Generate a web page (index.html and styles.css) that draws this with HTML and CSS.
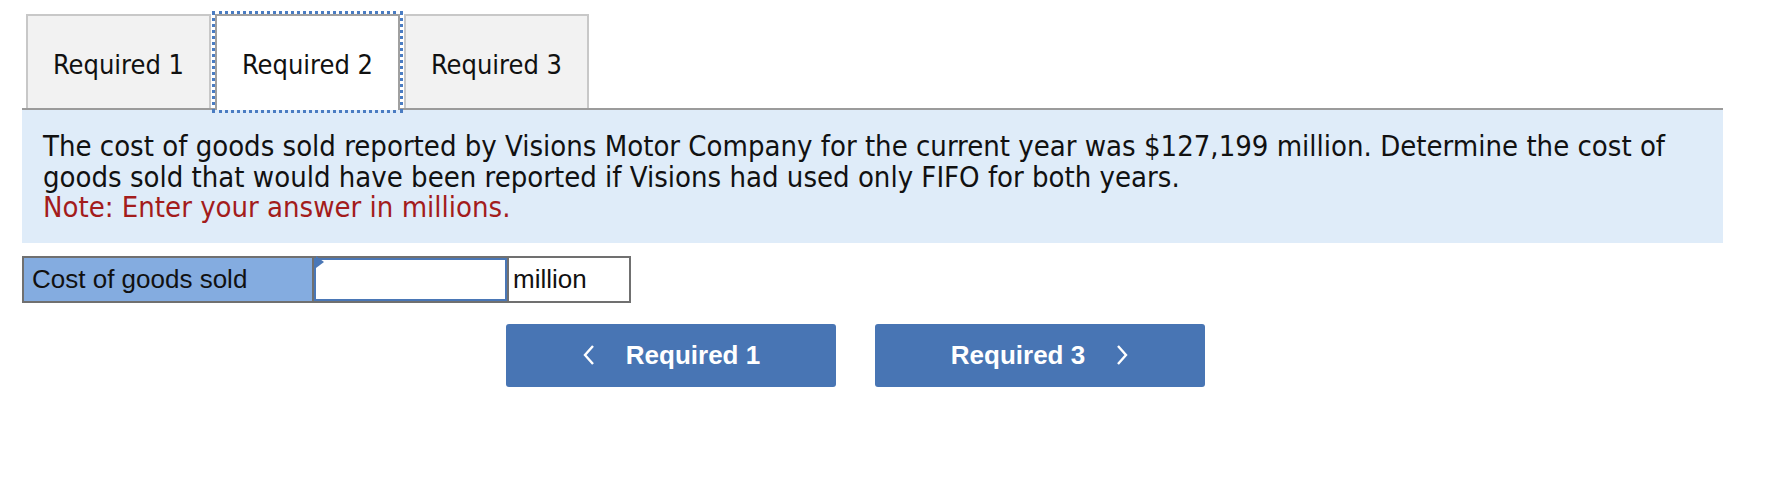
FILE: index.html
```html
<!DOCTYPE html>
<html>
<head>
<meta charset="utf-8">
<link rel="stylesheet" href="styles.css">
</head>
<body>
<div class="page">
  <div class="tabs">
    <div class="tab">Required 1</div>
    <div class="tab active">Required 2</div>
    <div class="tab">Required 3</div>
  </div>
  <div class="panel">
    <p class="q">The cost of goods sold reported by Visions Motor Company for the current year was $127,199 million. Determine the cost of goods sold that would have been reported if Visions had used only FIFO for both years.</p>
    <p class="note">Note: Enter your answer in millions.</p>
  </div>
  <div class="answer">
    <div class="cell label">Cost of goods sold</div>
    <div class="cell input"><span class="flag"></span></div>
    <div class="cell unit">million</div>
  </div>
  <div class="nav">
    <div class="btn prev">
      <svg width="14" height="24" viewBox="0 0 14 24"><polyline points="11,3 3,12 11,21" fill="none" stroke="#fff" stroke-width="2.4"/></svg>
      <span>Required 1</span>
    </div>
    <div class="btn next">
      <span>Required 3</span>
      <svg width="14" height="24" viewBox="0 0 14 24"><polyline points="3,3 11,12 3,21" fill="none" stroke="#fff" stroke-width="2.4"/></svg>
    </div>
  </div>
</div>
</body>
</html>
```

FILE: styles.css
```css
html, body {
  margin: 0;
  padding: 0;
  background: #fff;
}
.page {
  padding: 14px 0 0 22px;
  width: 1701px;
}
.tabs {
  display: flex;
  gap: 4px;
  padding-left: 4px;
  border-bottom: 2px solid #9b9b9b;
  height: 94px;
}
.tab {
  box-sizing: border-box;
  width: 185px;
  height: 94px;
  padding-top: 4px;
  background: #f2f2f2;
  border: 2px solid #c8c8c8;
  border-bottom: none;
  display: flex;
  align-items: center;
  justify-content: center;
  font-family: "DejaVu Sans Condensed", "DejaVu Sans", sans-serif;
  font-size: 27px;
  color: #111;
}
.tab.active {
  background: #fff;
  border-color: #a0a0a0;
  height: 96px;
  padding-top: 2px;
  outline: 3px dotted #4a7cc2;
  outline-offset: 0px;
}
.panel {
  background: #dfecf9;
  padding: 21px 20px 20px 21px;
  font-family: "DejaVu Sans Condensed", "DejaVu Sans", sans-serif;
  font-size: 29px;
  line-height: 30.6px;
  color: #111;
}
.panel p {
  margin: 0;
}
.panel .note {
  color: #a31c1c;
}
.answer {
  display: flex;
  gap: 2px;
  padding: 2px;
  width: 605px;
  height: 43px;
  margin-top: 13px;
  background: #707070;
  font-family: "Liberation Sans", Arial, sans-serif;
  font-size: 26px;
  color: #111;
}
.cell {
  box-sizing: border-box;
  height: 43px;
  display: flex;
  align-items: center;
}
.label {
  width: 288px;
  background: #84ace0;
  padding-left: 8px;
}
.input {
  width: 193px;
  position: relative;
  border: 2px solid #4a77b6;
  background: #fff;
}
.flag {
  position: absolute;
  left: 0;
  top: -4px;
  width: 0;
  height: 0;
  border-top: 6px solid transparent;
  border-bottom: 6px solid transparent;
  border-left: 8px solid #4a77b6;
}
.unit {
  width: 120px;
  padding-left: 4px;
  background: #fff;
}
.nav {
  display: flex;
  gap: 39px;
  margin: 21px 0 0 484px;
}
.btn {
  box-sizing: border-box;
  width: 330px;
  height: 63px;
  background: #4875b4;
  border-radius: 3px;
  display: flex;
  align-items: center;
  justify-content: center;
  gap: 30px;
  color: #fff;
  font-family: "Liberation Sans", Arial, sans-serif;
  font-weight: bold;
  font-size: 26px;
}
.btn svg {
  display: block;
}
```
